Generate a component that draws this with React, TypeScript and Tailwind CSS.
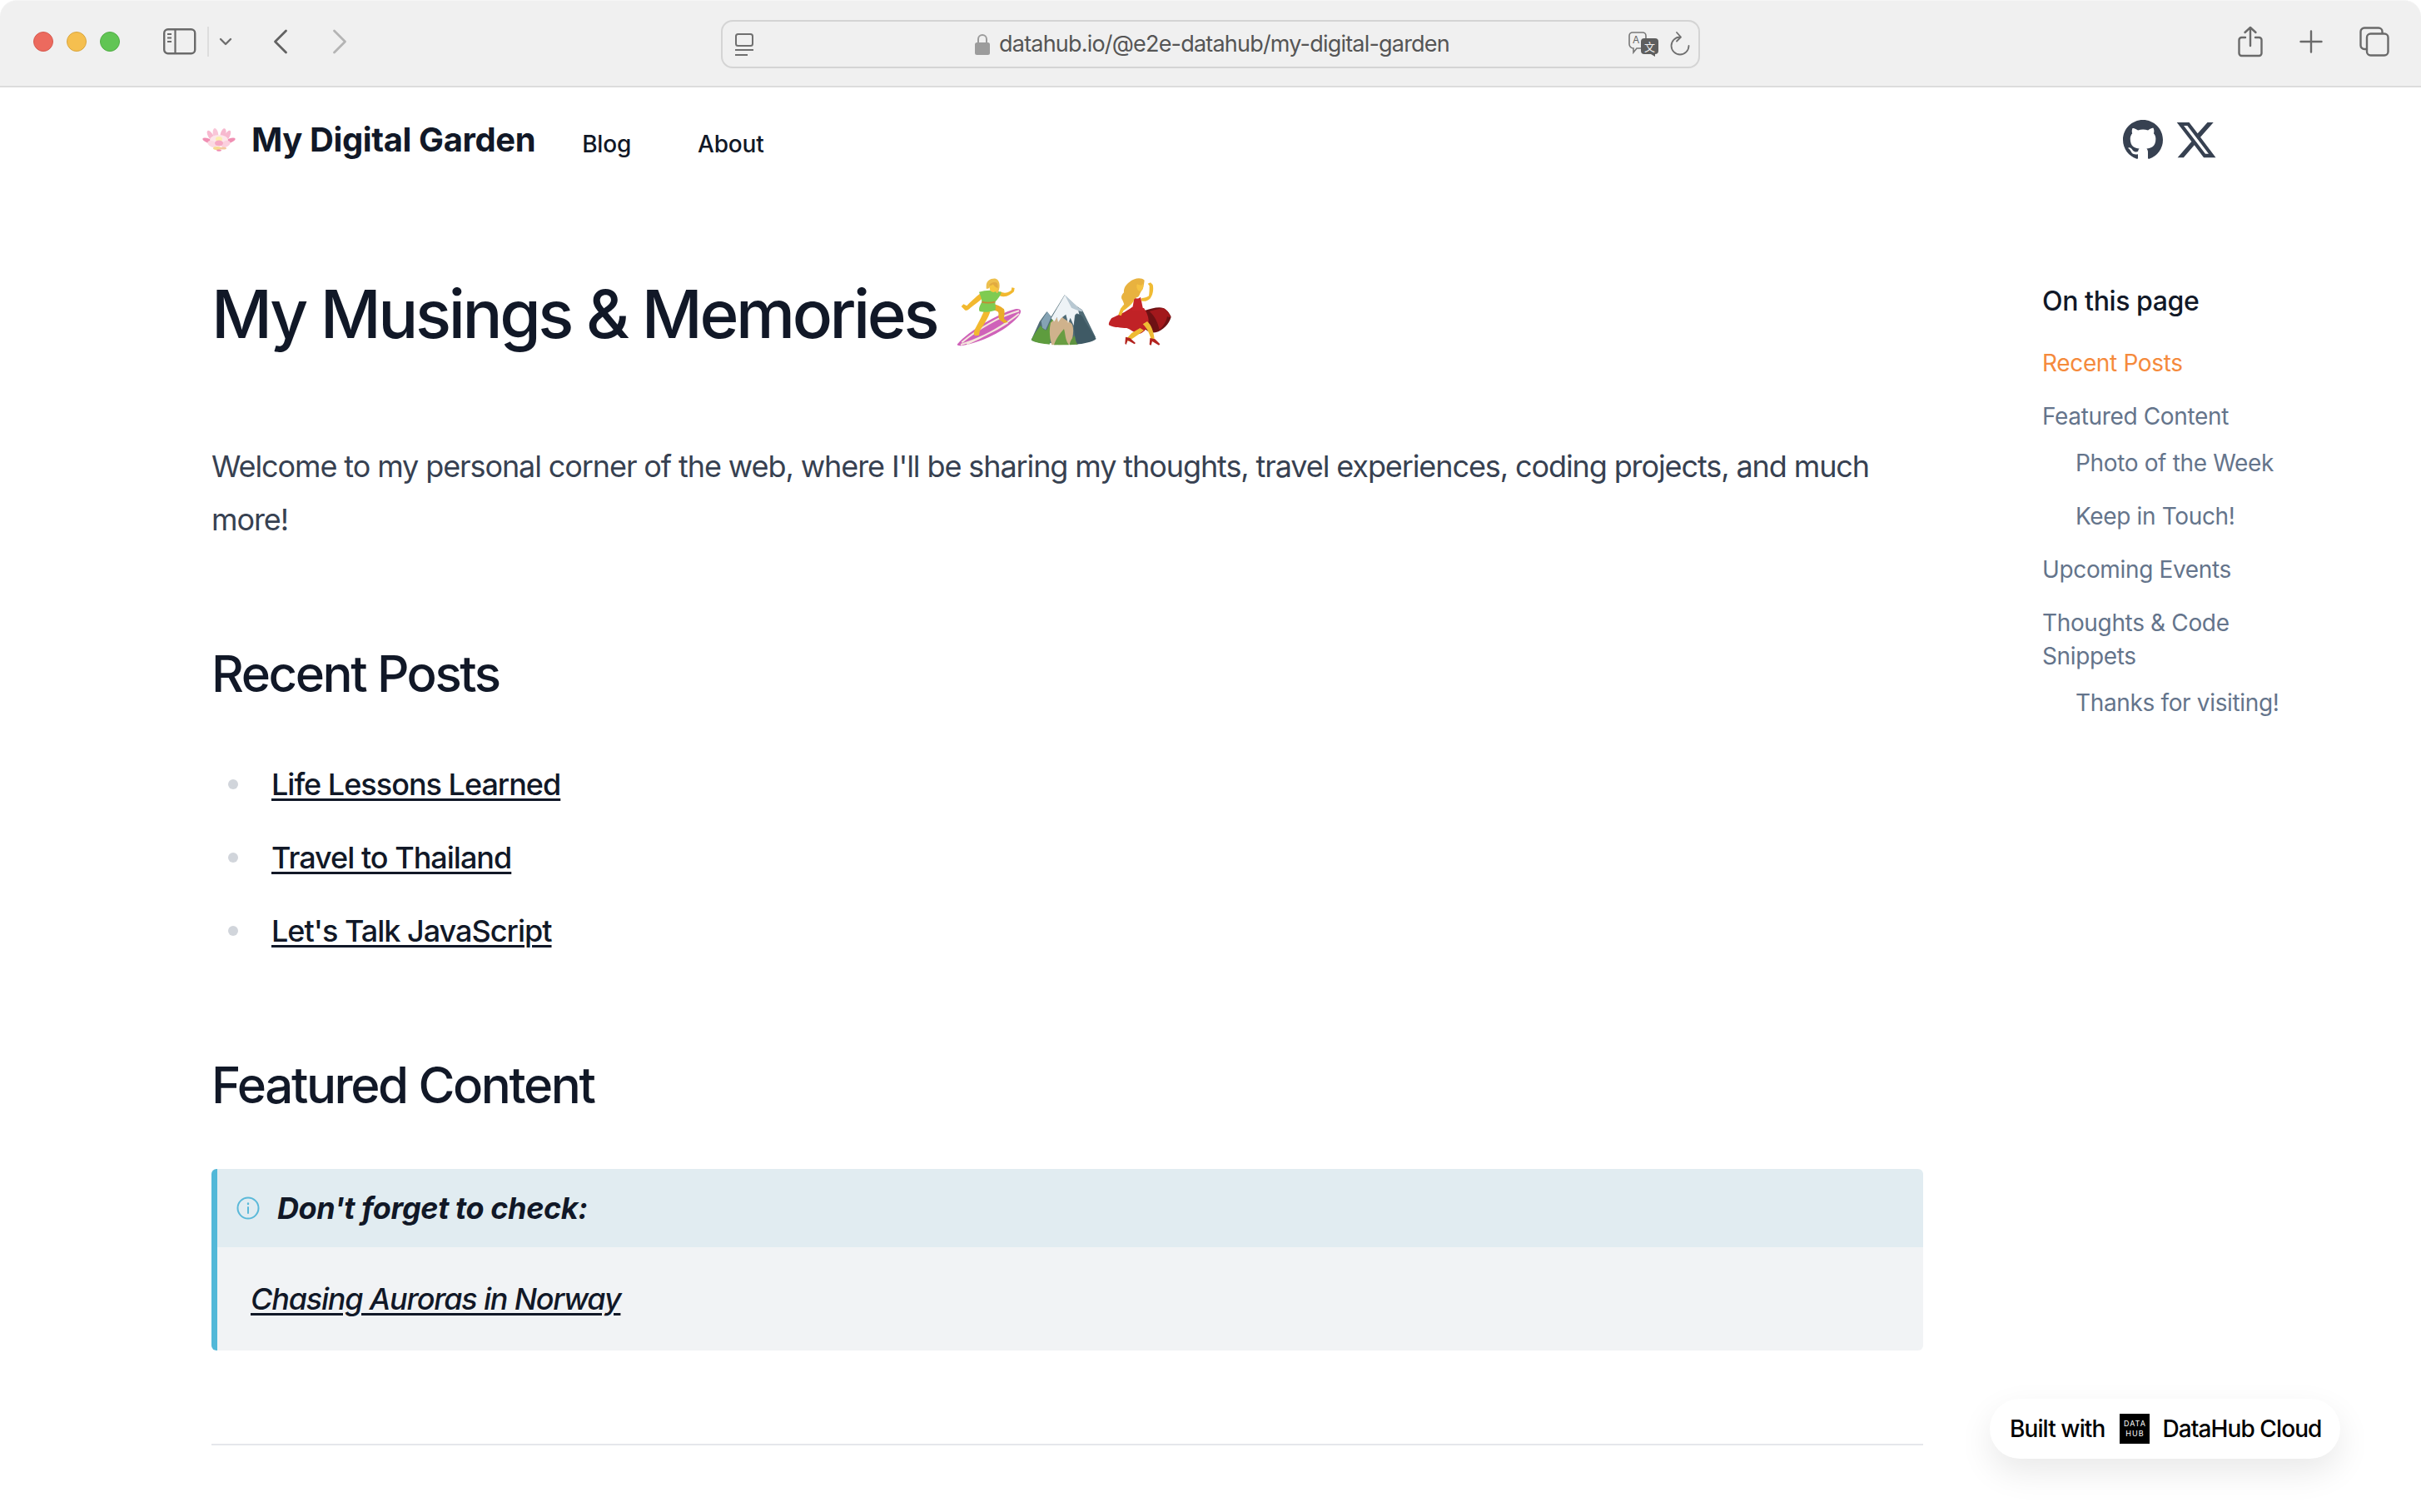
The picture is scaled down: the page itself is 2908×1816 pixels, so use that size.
import React from 'react';
import { FaXTwitter } from 'react-icons/fa6';

const TOC = [
  { label: 'Recent Posts', className: 'text-[#f58a3c]' },
  { label: 'Featured Content', className: 'mt-[24px]' },
  { label: 'Photo of the Week', className: 'mt-[16px] pl-[40px]' },
  { label: 'Keep in Touch!', className: 'mt-[24px] pl-[40px]' },
  { label: 'Upcoming Events', className: 'mt-[24px]' },
  { label: 'Thoughts & Code Snippets', className: 'mt-[24px] w-[280px]' },
  { label: 'Thanks for visiting!', className: 'mt-[16px] pl-[40px]' },
];

const POSTS = ['Life Lessons Learned', 'Travel to Thailand', "Let's Talk JavaScript"];

const GITHUB_PATH =
  'M8 0C3.58 0 0 3.58 0 8c0 3.54 2.29 6.53 5.47 7.59.4.07.55-.17.55-.38 0-.19-.01-.82-.01-1.49-2.01.37-2.53-.49-2.69-.94-.09-.23-.48-.94-.82-1.13-.28-.15-.68-.52-.01-.53.63-.01 1.08.58 1.23.82.72 1.21 1.87.87 2.33.66.07-.52.28-.87.51-1.07-1.78-.2-3.64-.89-3.64-3.95 0-.87.31-1.59.82-2.15-.08-.2-.36-1.02.08-2.12 0 0 .67-.21 2.2.82.64-.18 1.32-.27 2-.27.68 0 1.36.09 2 .27 1.53-1.04 2.2-.82 2.2-.82.44 1.1.16 1.92.08 2.12.51.56.82 1.27.82 2.15 0 3.07-1.87 3.75-3.65 3.95.29.25.54.73.54 1.48 0 1.07-.01 1.93-.01 2.2 0 .21.15.46.55.38A8.013 8.013 0 0016 8c0-4.42-3.58-8-8-8z';

const Lotus = () => (
  <svg width="40" height="28" viewBox="0 0 40 28" className="shrink-0">
    <g fill="#f7b9cf">
      <ellipse cx="7" cy="15" rx="7" ry="2.6" transform="rotate(20 7 15)" fill="#f08fb3" />
      <ellipse cx="33" cy="15" rx="7" ry="2.6" transform="rotate(-20 33 15)" fill="#f08fb3" />
      <ellipse cx="10" cy="9" rx="3" ry="7" transform="rotate(-30 10 9)" />
      <ellipse cx="30" cy="9" rx="3" ry="7" transform="rotate(28 30 9)" />
      <ellipse cx="16" cy="7" rx="3.2" ry="7" transform="rotate(-10 16 7)" fill="#f9c6d8" />
      <ellipse cx="25" cy="7" rx="3.2" ry="7" transform="rotate(15 25 7)" fill="#f7b9cf" />
    </g>
    <ellipse cx="20" cy="14" rx="11" ry="6" fill="#fde6ea" />
    <ellipse cx="20" cy="13" rx="4" ry="3" fill="#fbeeb0" />
    <ellipse cx="12" cy="19" rx="6" ry="3.6" fill="#fbd9e2" transform="rotate(25 12 19)" />
    <ellipse cx="28" cy="19" rx="6" ry="3.6" fill="#fbd0de" transform="rotate(-25 28 19)" />
    <ellipse cx="20" cy="18" rx="5" ry="3.4" fill="#f6a9c4" />
    <ellipse cx="18" cy="24" rx="5" ry="2" fill="#f6d98f" />
    <ellipse cx="25" cy="24" rx="4" ry="1.6" fill="#f4c9a0" />
    <ellipse cx="20" cy="26.6" rx="3" ry="1.2" fill="#f08db0" />
  </svg>
);

// the three emoji are traced on 3x crops, so the viewBox is 3 times the size
const Surfer = () => (
  <svg width="90" height="90" viewBox="0 0 270 270" className="shrink-0">
    <path d="M18 250C60 202 160 142 226 124c24-5 26 10 10 28-46 52-134 92-200 103-14 2-22-1-18-5z" fill="#cf62b9" />
    <path d="M34 244C90 196 170 150 240 130M52 250C112 224 190 180 240 140M30 252C80 236 150 204 200 172" stroke="#f4e6dc" strokeWidth="6" fill="none" />
    <path d="M118 118c-8 26-22 50-36 76-4 10-8 18 0 26l14-2c2-10 2-16 6-22 14-20 26-40 34-62z" fill="#f2b92f" />
    <path d="M140 104c18 2 36 10 46 20 4 10 0 24 0 34l14 12-14 4c-14-10-20-14-20-24 0-8 2-14-4-18-10-4-20-6-30-6z" fill="#e9ad28" />
    <path d="M102 66C82 82 62 100 52 112l-12-6-8 8 14 14c6 2 12-2 18-8 16-14 36-26 48-40zM172 60c14 8 26 6 40-4l2-10 10 2-2 12c-12 12-30 24-52 16z" fill="#f2b92f" />
    <path d="M96 62c24-8 54-8 80 0-2 14-14 26-22 36 0 12 4 20 0 30-16 6-40 8-56 4-6-12 4-26 8-34 0-12-6-24-10-36z" fill="#7fcb52" />
    <path d="M106 98c14 4 30 4 48 0" stroke="#c58a34" strokeWidth="5" fill="none" />
    <path d="M122 40c0-18 16-28 34-26 14 4 18 26 10 46-2 8-8 8-10 0l-20-16c-4 4-8 8-14 6z" fill="#edc04e" />
    <ellipse cx="148" cy="48" rx="14" ry="15" fill="#f6c73e" />
    <path d="M132 38c6-10 20-14 30-8 2 6 2 12 2 18-10-2-14-8-18-14-2 4-8 6-14 4z" fill="#e2ab40" />
  </svg>
);

const Mountain = () => (
  <svg width="90" height="75" viewBox="0 0 270 225" className="shrink-0">
    <path d="M14 190l30-66 26-36 16 18 48-78 46 42 18 12 48 98c-20 12-50 18-70 20l-110 2c-20-2-40-4-52-12z" fill="#4f6b76" />
    <path d="M50 122l22-34 14 20-20 46-12-8z" fill="#85a3b4" />
    <path d="M14 190c10-20 22-38 34-52 8 10 10 18 22 16 6-12 10-30 26-48 8 24 0 40-8 62l-8 38c-24-2-52-6-66-16z" fill="#5e9c3e" />
    <path d="M84 128c14-14 28-26 42-20 14 14 22 10 36 26 8 24 0 50-4 72l-70 2c-8-28-10-54-4-80z" fill="#cfb28c" />
    <path d="M86 112l49-84 46 44 6 26c-8-6-12-4-16 4l-4 36-12-28-8 20-8-32-18 14-10 14-4-18-10 16z" fill="#eef3f6" />
    <path d="M135 28l46 44c8 4 16 8 20 16-12 0-24-6-42-14z" fill="#b8c8d2" />
    <path d="M176 100c18-6 24 6 30 20l42 66c-14 12-48 18-72 20-2-36-16-56 0-106z" fill="#3f5a65" />
    <path d="M96 208c8-24 22-42 36-58 6 20 4 40 18 58z" fill="#699d42" />
    <path d="M152 208c2-14 8-24 18-34 4 12 4 24 12 32z" fill="#5e9440" />
  </svg>
);

const Dancer = () => (
  <svg width="90" height="90" viewBox="0 0 270 270" className="shrink-0">
    <path d="M150 130c26-8 52-16 70-10 14 6 26 24 28 32-8 26-28 48-56 56-20 2-34-6-42-18z" fill="#6e1114" />
    <path d="M108 116c-20 16-52 30-74 40-8 10-14 24-8 26 20 10 40 8 62 10 14 4 28 18 42 22 16-2 30-18 36-34 4-18-2-40-16-60z" fill="#c02226" />
    <path d="M170 132c20-6 38-10 50-12 12 4 22 20 26 32-4 2-8 0-12-2-2 14-10 32-28 48-6-24-14-46-36-66z" fill="#a3181c" />
    <path d="M114 80c8 8 18 6 24 0l10 48-42 2c4-16 8-32 8-50z" fill="#c52328" />
    <path d="M136 192l-30 18-20 22 8 8 32-22 24-18zM146 178c14 14 22 28 30 54l12-2c-4-28-12-50-26-62z" fill="#efbb33" />
    <path d="M84 224l-2 24 4 4 6-16 24 14 4-4-20-18zM172 228l-2 24 6 2 4-14 24 14 4-4-18-18z" fill="#b3231f" />
    <path d="M112 82C92 94 76 108 66 122l-8 22 10 4 8-18c14-10 28-20 38-36zM142 84c10 0 18-2 26-8 2-12 2-24 2-36l-6-8 10-4 8 8c4 18 0 38-10 50-8 8-20 12-32 8z" fill="#f0bb33" />
    <path d="M98 26c16-14 42-18 54-6-2 16-4 30-12 40-6 10-6 18-12 20-12 4-14 14-24 14-2 12-14 22-26 26 4-10-2-22-6-30-6-8-2-18 6-26-2-14 6-28 20-38z" fill="#e8b23f" />
    <ellipse cx="136" cy="42" rx="12" ry="17" fill="#f5c342" />
    <path d="M120 30c8-8 20-10 30-6l-8 14c-8 0-14-2-22-8z" fill="#e8b23f" />
  </svg>
);

const Toolbar = () => (
  <div className="h-[105px] shrink-0 flex items-start bg-[#f0f0f0] rounded-t-[20px] border-b-2 border-[#dcdcdc] border-t border-t-[#f6f6f6]">
    <div className="w-[866px] h-[103px] shrink-0 flex items-center pb-[6px]">
      <div className="ml-[40px] flex gap-[16px]">
        <span className="w-[24px] h-[24px] rounded-full bg-[#ec6a5e] border border-[#d65b50]" />
        <span className="w-[24px] h-[24px] rounded-full bg-[#f5bf4f] border border-[#d9a63f]" />
        <span className="w-[24px] h-[24px] rounded-full bg-[#61c554] border border-[#52ad46]" />
      </div>
      <svg width="40" height="32" viewBox="0 0 40 32" fill="none" stroke="#6a6a6a" className="ml-[52px]">
        <rect x="1.2" y="1.2" width="37" height="29" rx="4.5" strokeWidth="2.4" />
        <path d="M14.5 1v30" strokeWidth="2.2" />
        <path d="M5 7h5M5 11.5h5M5 16h5" strokeWidth="1.8" />
      </svg>
      <span className="ml-[13px] w-[2px] h-[36px] bg-[#dddddd]" />
      <svg width="16" height="10" viewBox="0 0 16 10" fill="none" stroke="#6e6e6e" strokeWidth="2.4" strokeLinecap="round" strokeLinejoin="round" className="ml-[12px]">
        <path d="M2 2l6 6 6-6" />
      </svg>
      <svg width="18" height="30" viewBox="0 0 18 30" fill="none" stroke="#626262" strokeWidth="2.8" strokeLinecap="round" strokeLinejoin="round" className="ml-[49px]">
        <path d="M15.500 2L2.500 15l13 13" />
      </svg>
      <svg width="18" height="30" viewBox="0 0 18 30" fill="none" stroke="#b4b4b4" strokeWidth="2.8" strokeLinecap="round" strokeLinejoin="round" className="ml-[53px]">
        <path d="M2.500 2l13 13-13 13" />
      </svg>
    </div>

    <div className="mt-[23px] w-[1176px] h-[58px] shrink-0 flex items-center rounded-[14px] border-2 border-[#d4d4d4]">
      <div className="flex-1 flex items-center pl-[15px]">
        <svg width="22" height="27" viewBox="0 0 22 27" fill="none" stroke="#6f6f6f" className="shrink-0">
          <rect x="1" y="1" width="20" height="14" rx="2.5" strokeWidth="2" />
          <path d="M0 20h22" strokeWidth="2" />
          <path d="M0 26h15" strokeWidth="2" />
        </svg>
      </div>
      <div className="flex items-center mr-[2px]">
        <svg width="20" height="26" viewBox="0 0 20 26" className="mr-[10px] shrink-0">
          <path d="M5 12V7a5 5 0 0110 0v5" fill="none" stroke="#9c9c9c" strokeWidth="2" />
          <rect x="1" y="11" width="18" height="15" rx="2.500" fill="#9c9c9c" />
        </svg>
        <span className="text-[27px] leading-[36px] tracking-[-0.8px] text-[#555555] whitespace-nowrap">datahub.io/@e2e-datahub/my-digital-garden</span>
      </div>
      <div className="flex-1 flex items-center justify-end pr-[10px]">
        <svg width="38" height="30" viewBox="0 0 38 30" className="shrink-0">
          <path d="M6 1h12a4 4 0 014 4v11a4 4 0 01-4 4H11l-4 5v-5a5 5 0 01-5-5V5a4 4 0 014-4z" fill="#f0f0f0" stroke="#777777" strokeWidth="1.6" />
          <text x="6" y="14" fontSize="12" fill="#666666" fontFamily="Inter, sans-serif">A</text>
          <path d="M20 8h13a4 4 0 014 4v11a4 4 0 01-4 4v3l-5-3h-8a4 4 0 01-4-4V12a4 4 0 014-4z" fill="#5e5e5e" />
          <text x="20" y="23" fontSize="13" fill="#f0f0f0" fontFamily="Noto Sans CJK SC, sans-serif">文</text>
        </svg>
        <svg width="24" height="32" viewBox="0 0 24 32" fill="none" stroke="#6f6f6f" strokeWidth="1.800" strokeLinecap="round" strokeLinejoin="round" className="ml-[13px] shrink-0">
          <path d="M12 7.500A10.500 10.500 0 1 0 22.500 18" />
          <path d="M8 2l5 5.500-5 5" />
        </svg>
      </div>
    </div>

    <div className="flex-1 h-[103px] flex items-center justify-end pb-[6px] pr-[38px]">
      <svg width="30" height="38" viewBox="0 0 30 38" fill="none" stroke="#6a6a6a" strokeWidth="2.4" strokeLinecap="round" strokeLinejoin="round">
        <path d="M9 14H4.500a3 3 0 00-3 3v16a3 3 0 003 3h21a3 3 0 003-3V17a3 3 0 00-3-3H21" />
        <path d="M15 24V2M8.500 8L15 2l6.500 6" />
      </svg>
      <svg width="28" height="28" viewBox="0 0 28 28" fill="none" stroke="#6a6a6a" strokeWidth="2.4" strokeLinecap="round" className="ml-[44px]">
        <path d="M14 1.500v25M1.500 14h25" />
      </svg>
      <svg width="36" height="36" viewBox="0 0 36 36" fill="none" stroke="#6a6a6a" strokeWidth="2.4" className="ml-[44px]">
        <path d="M8 27H6a4.500 4.500 0 01-4.500-4.500V6A4.500 4.500 0 016 1.500h17a4.500 4.500 0 014.500 4.500v2" />
        <rect x="9" y="8.500" width="25.500" height="26" rx="4.500" />
      </svg>
    </div>
  </div>
);

const Header = () => (
  <header className="h-[130px] shrink-0 flex items-center pl-[243px] pr-[244px]">
    <div className="flex items-center mt-[-4px]">
      <Lotus />
      <span className="ml-[19px] text-[40px] leading-[56px] font-bold text-[#111827] tracking-[-0.4px]">My Digital Garden</span>
    </div>
    <nav className="flex items-center ml-[56px] gap-[80px] mt-[5px] tracking-[-0.2px]">
      <a className="text-[28px] leading-[40px] font-medium text-[#111827]">Blog</a>
      <a className="text-[28px] leading-[40px] font-medium text-[#111827]">About</a>
    </nav>
    <div className="ml-auto flex items-center gap-[14px] text-[#374151] mt-[-4px]">
      <svg width="48" height="48" viewBox="0 0 16 16" fill="currentColor">
        <path d={GITHUB_PATH} />
      </svg>
      <FaXTwitter size={52} />
    </div>
  </header>
);

const Content = () => (
  <main className="w-[2056px] shrink-0 text-[#111827]">
    <div className="flex items-start mt-[95px] h-[90px]">
      <h1 className="mt-[2px] text-[80px] leading-[90px] font-medium tracking-[-3.4px] whitespace-nowrap">My Musings &amp; Memories</h1>
      <div className="flex items-end h-[90px] ml-[19px]">
        <Surfer />
        <Mountain />
        <Dancer />
      </div>
    </div>

    <p className="mt-[108px] text-[36px] leading-[64px] tracking-[-1.1px] text-[#374151]">
      Welcome to my personal corner of the web, where I'll be sharing my thoughts, travel experiences, coding projects, and much more!
    </p>

    <h2 className="mt-[117px] text-[60px] leading-[72px] font-medium tracking-[-2.4px]">Recent Posts</h2>

    <ul className="mt-[65px] flex flex-col gap-[24px]">
      {POSTS.map((post) => (
        <li key={post} className="flex items-center h-[64px]">
          <span className="ml-[20px] w-[12px] h-[12px] rounded-full bg-[#d1d5db]" />
          <a className="ml-[40px] text-[36px] leading-[64px] font-medium tracking-[-1px] underline decoration-[3px] underline-offset-[4px]">{post}</a>
        </li>
      ))}
    </ul>

    <h2 className="mt-[117px] text-[60px] leading-[72px] font-medium tracking-[-2.4px]">Featured Content</h2>

    <div className="mt-[65px] rounded-[6px] border-l-[7px] border-[#52b8d8] overflow-hidden">
      <div className="h-[94px] bg-[#e1ecf1] flex items-center pl-[23px]">
        <svg width="28" height="28" viewBox="0 0 28 28" fill="none" stroke="#5bb9d9" strokeLinecap="round">
          <circle cx="14" cy="14" r="12.500" strokeWidth="2" />
          <path d="M14 13v7" strokeWidth="2" />
          <path d="M14 8.500v.5" strokeWidth="2.400" />
        </svg>
        <span className="ml-[21px] text-[36px] font-bold italic tracking-[-0.4px]">Don't forget to check:</span>
      </div>
      <div className="h-[124px] bg-[#f1f3f5] flex items-center pl-[40px]">
        <a className="text-[36px] leading-[64px] italic font-medium tracking-[-1.2px] underline decoration-[3px] underline-offset-[4px]">Chasing Auroras in Norway</a>
      </div>
    </div>

    <hr className="mt-[112px] border-t-2 border-[#e5e7eb]" />
  </main>
);

const Toc = () => (
  <aside className="w-[310px] ml-[143px] shrink-0 pt-[103px]">
    <div className="text-[32px] leading-[48px] font-medium tracking-[-0.4px] text-[#111827]">On this page</div>
    <ul className="mt-[30px] text-[28px] leading-[40px] tracking-[-0.35px] text-[#64748b]">
      {TOC.map((item) => (
        <li key={item.label} className={item.className}>{item.label}</li>
      ))}
    </ul>
  </aside>
);

export default function App() {
  return (
    <div className="relative w-[2908px] h-[1816px] overflow-hidden bg-white flex flex-col font-['Inter',sans-serif]">
      <Toolbar />
      <Header />
      <div className="flex pl-[254px] flex-1 min-h-0">
        <Content />
        <Toc />
      </div>
      {/* floating badge */}
      <div className="absolute left-[2390px] top-[1680px] w-[421px] h-[72px] rounded-full bg-white flex items-center pl-[24px] text-[28px] font-medium tracking-[-0.9px] whitespace-nowrap text-black shadow-[0_16px_40px_rgba(0,0,0,0.09)]">
        <span>Built with</span>
        <div className="ml-[18px] w-[36px] h-[36px] bg-black text-white flex flex-col items-center justify-center text-[9px] leading-[12px] font-normal tracking-[1px]">
          <span>DATA</span>
          <span>HUB</span>
        </div>
        <span className="ml-[15px]">DataHub Cloud</span>
      </div>
    </div>
  );
}
